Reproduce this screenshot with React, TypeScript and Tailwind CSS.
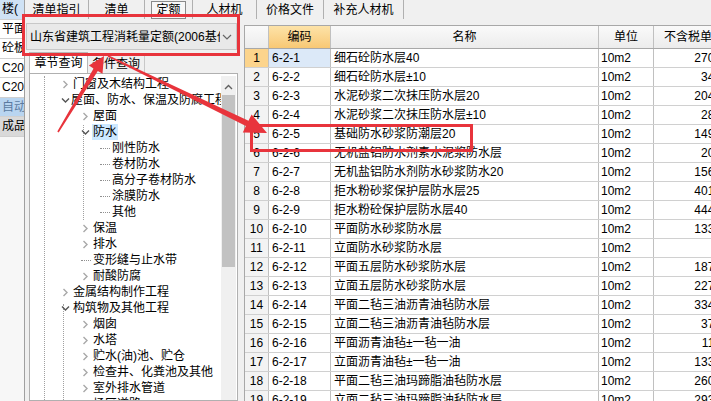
import React from "react";

const FONT = { fontFamily: '"Liberation Sans", "Noto Sans CJK SC", sans-serif' };

const leftCells = [
  { t: "楼(", cls: "bg-[#cfe2f5]" },
  { t: "平面", cls: "bg-white" },
  { t: "砼板", cls: "bg-white" },
  { t: "C20细石混凝土", cls: "bg-white" },
  { t: "C20细石混凝土", cls: "bg-white" },
  { t: "自动", cls: "bg-[#b9d5f0] text-[#5a7aa0]" },
  { t: "成品", cls: "bg-[#d9d9d9]" },
];

const tabs = [
  { t: "清单指引", w: "w-[64px]" },
  { t: "清单", w: "w-[56px]" },
  { t: "定额", w: "w-[48px]", active: true },
  { t: "人材机", w: "w-[64px]" },
  { t: "价格文件", w: "w-[67px]" },
  { t: "补充人材机", w: "w-[80px]" },
];

type Node = { t: string; lvl: number; kind: "open" | "closed" | "leaf"; sel?: boolean };

const tree: Node[] = [
  { t: "门窗及木结构工程", lvl: 0, kind: "closed" },
  { t: "屋面、防水、保温及防腐工程", lvl: 0, kind: "open" },
  { t: "屋面", lvl: 1, kind: "closed" },
  { t: "防水", lvl: 1, kind: "open", sel: true },
  { t: "刚性防水", lvl: 2, kind: "leaf" },
  { t: "卷材防水", lvl: 2, kind: "leaf" },
  { t: "高分子卷材防水", lvl: 2, kind: "leaf" },
  { t: "涂膜防水", lvl: 2, kind: "leaf" },
  { t: "其他", lvl: 2, kind: "leaf" },
  { t: "保温", lvl: 1, kind: "closed" },
  { t: "排水", lvl: 1, kind: "closed" },
  { t: "变形缝与止水带", lvl: 1, kind: "leaf" },
  { t: "耐酸防腐", lvl: 1, kind: "closed" },
  { t: "金属结构制作工程", lvl: 0, kind: "closed" },
  { t: "构筑物及其他工程", lvl: 0, kind: "open" },
  { t: "烟囱", lvl: 1, kind: "closed" },
  { t: "水塔", lvl: 1, kind: "closed" },
  { t: "贮水(油)池、贮仓", lvl: 1, kind: "closed" },
  { t: "检查井、化粪池及其他", lvl: 1, kind: "closed" },
  { t: "室外排水管道", lvl: 1, kind: "closed" },
  { t: "场区道路", lvl: 1, kind: "closed" },
];

const rows = [
  ["6-2-1", "细石砼防水层40", "270.45"],
  ["6-2-2", "细石砼防水层±10", "34.62"],
  ["6-2-3", "水泥砂浆二次抹压防水层20", "204.18"],
  ["6-2-4", "水泥砂浆二次抹压防水层±10", "28.37"],
  ["6-2-5", "基础防水砂浆防潮层20", "149.86"],
  ["6-2-6", "无机盐铝防水剂素水泥浆防水层", "20.53"],
  ["6-2-7", "无机盐铝防水剂防水砂浆防水20", "156.72"],
  ["6-2-8", "拒水粉砂浆保护层防水层25", "401.35"],
  ["6-2-9", "拒水粉砼保护层防水层40", "444.91"],
  ["6-2-10", "平面防水砂浆防水层", "133.40"],
  ["6-2-11", "立面防水砂浆防水层", ""],
  ["6-2-12", "平面五层防水砂浆防水层", "187.26"],
  ["6-2-13", "立面五层防水砂浆防水层", "227.08"],
  ["6-2-14", "平面二毡三油沥青油毡防水层", "334.57"],
  ["6-2-15", "立面二毡三油沥青油毡防水层", "37.64"],
  ["6-2-16", "平面沥青油毡±一毡一油", "11.29"],
  ["6-2-17", "立面沥青油毡±一毡一油", "133.81"],
  ["6-2-18", "平面二毡三油玛蹄脂油毡防水层", "260.14"],
  ["6-2-19", "立面二毡三油玛蹄脂油毡防水层", "293.52"],
];

function Chevron({ open }: { open: boolean }) {
  return (
    <svg width="9" height="9" viewBox="0 0 9 9" className="shrink-0">
      {open ? (
        <path d="M1 2.5 L4.5 6 L8 2.5" fill="none" stroke="#555" strokeWidth="1.4" />
      ) : (
        <path d="M2.5 1 L6 4.5 L2.5 8" fill="none" stroke="#a8a8a8" strokeWidth="1.4" />
      )}
    </svg>
  );
}

function TreeRow({ n }: { n: Node }) {
  const pad = n.lvl === 0 ? "pl-[31px]" : n.lvl === 1 ? "pl-[51px]" : "pl-[70px]";
  return (
    <div className={`h-[16px] flex items-center whitespace-nowrap ${pad}`}>
      {n.kind === "leaf" ? (
        <span className="w-[10px] mr-[1px] border-t border-dotted border-[#909090]" />
      ) : (
        <span className="w-[11px] flex items-center">
          <Chevron open={n.kind === "open"} />
        </span>
      )}
      <span className={`leading-[16px] px-[1px] ${n.sel ? "bg-[#cce8ff]" : ""}`}>{n.t}</span>
    </div>
  );
}

export default function App() {
  return (
    <div
      className="relative w-[711px] h-[401px] overflow-hidden bg-[#f0f0f0] text-[12px] text-black flex"
      style={FONT}
    >
      {/* background sheet peeking out on the left */}
      <div className="w-[25px] shrink-0 flex flex-col border-r border-[#a0a0a0] bg-[#f7f7f7]">
        {leftCells.map((c, i) => (
          <div
            key={i}
            className={`h-[19.5px] leading-[19px] pl-[2px] overflow-hidden whitespace-nowrap border-b border-[#d0d0d0] ${c.cls}`}
          >
            {c.t}
          </div>
        ))}
      </div>

      {/* popup window */}
      <div className="flex-1 flex flex-col min-w-0">
        {/* top tab bar */}
        <div className="h-[19px] flex items-stretch shrink-0">
          {tabs.map((tb) => (
            <div key={tb.t} className={`${tb.w} flex items-center justify-center border-r border-[#b0b0b0]`}>
              <span className={tb.active ? "px-[4px] h-[18px] leading-[17px] border border-[#8a8a8a] bg-[#f7f7f7]" : ""}>
                {tb.t}
              </span>
            </div>
          ))}
        </div>

        <div className="flex-1 flex min-h-0">
          {/* left pane */}
          <div className="w-[219px] shrink-0 flex flex-col pl-[1px]">
            <div className="mt-[4px] h-[27px] w-[211px] flex items-center border border-[#c8c8c8] bg-[#e9e9e9] pl-[3px] pr-[4px] whitespace-nowrap overflow-hidden">
              <span className="flex-1 overflow-hidden">山东省建筑工程消耗量定额(2006基价)</span>
              <svg width="10" height="8" viewBox="0 0 10 8" className="shrink-0 ml-[2px]">
                <path d="M1 2 L5 6 L9 2" fill="none" stroke="#666" strokeWidth="1.2" />
              </svg>
            </div>
            <div className="h-[23px] flex items-end pl-[3px]">
              <div className="h-[21px] w-[59px] flex items-center justify-center border border-b-0 border-[#b8b8b8] bg-white">
                章节查询
              </div>
              <div className="h-[19px] w-[57px] flex items-center justify-center border-t border-r border-[#c8c8c8]">
                条件查询
              </div>
            </div>
            <div className="flex-1 ml-[3px] w-[209px] border border-[#b0b0b0] bg-white flex min-h-0 pt-[2px]">
              <div className="relative flex-1 min-w-0 overflow-hidden">
                <div className="absolute left-[14px] top-0 bottom-0 border-l border-dotted border-[#a0a0a0]" />
                <div className="absolute left-[33px] top-[228px] bottom-0 border-l border-dotted border-[#a0a0a0]" />
                <div className="absolute left-[53px] top-[49px] bottom-[180px] border-l border-dotted border-[#a0a0a0]" />
                <div className="relative">
                  {tree.map((n, i) => (
                    <TreeRow key={i} n={n} />
                  ))}
                </div>
              </div>
              <div className="w-[15px] shrink-0 flex flex-col items-center bg-[#f0f0f0] mr-[1px]">
                <svg width="9" height="6" viewBox="0 0 9 6" className="mt-[8px]">
                  <path d="M1 5 L4.5 1.5 L8 5" fill="none" stroke="#606060" strokeWidth="1.4" />
                </svg>
                <div className="mt-[5px] w-[13px] h-[172px] bg-[#c2c2c2]" />
              </div>
            </div>
          </div>

          {/* table */}
          <div className="flex-1 min-w-0 overflow-hidden mt-[6px]">
            <div className="w-[490px] border-l border-t border-[#a8a8a8] bg-white">
              <div className="flex h-[23px] border-b border-[#a8a8a8] bg-gradient-to-b from-[#fafafa] to-[#ececec]">
                <div className="w-[24px] border-r border-[#c0c0c0]" />
                <div className="w-[62px] border-r border-[#c0c0c0] flex items-center justify-center bg-gradient-to-b from-[#fde3a8] to-[#f8c874]">
                  编码
                </div>
                <div className="w-[268px] border-r border-[#c0c0c0] flex items-center justify-center">名称</div>
                <div className="w-[55px] border-r border-[#c0c0c0] flex items-center justify-center">单位</div>
                <div className="w-[80px] flex items-center justify-center whitespace-nowrap">不含税单价</div>
              </div>
              {rows.map((r, i) => (
                <div key={i} className="flex h-[19px] leading-[18px] border-b border-[#d0d0d0] whitespace-nowrap">
                  <div
                    className={`w-[24px] text-center border-r border-[#c0c0c0] ${
                      i === 0 ? "bg-[#fcd48c]" : "bg-[#f3f3f3]"
                    }`}
                  >
                    {i + 1}
                  </div>
                  <div className={`w-[62px] pl-[3px] border-r border-[#c0c0c0] ${i === 0 ? "bg-[#dce9f8]" : ""}`}>
                    {r[0]}
                  </div>
                  <div className="w-[268px] pl-[3px] border-r border-[#c0c0c0] overflow-hidden">{r[1]}</div>
                  <div className="w-[55px] pl-[2px] border-r border-[#c0c0c0]">10m2</div>
                  <div className="w-[80px] pr-[3px] text-right">{r[2]}</div>
                </div>
              ))}
            </div>
          </div>
        </div>
      </div>

      {/* red annotation overlay */}
      <svg className="absolute inset-0 pointer-events-none" width="711" height="401" viewBox="0 0 711 401">
        <g fill="none" stroke="#e8343c" strokeWidth="3">
          <rect x="23.5" y="15.5" width="215" height="39" />
          <rect x="251.5" y="125.5" width="220" height="25" />
        </g>
        <g fill="#e8343c">
          {/* arrow up toward the dropdown */}
          <polygon points="58.7,132.4 97.8,71 102.5,73.8 104,56 88.9,65.6 93.6,68.4 57.3,131.6" />
          {/* arrow down toward row 6-2-5 */}
          <polygon points="108.3,55.3 248.5,120.7 251.6,114.4 267,133 242.8,132.4 245.9,126.1 107.7,56.7" />
        </g>
      </svg>
    </div>
  );
}
